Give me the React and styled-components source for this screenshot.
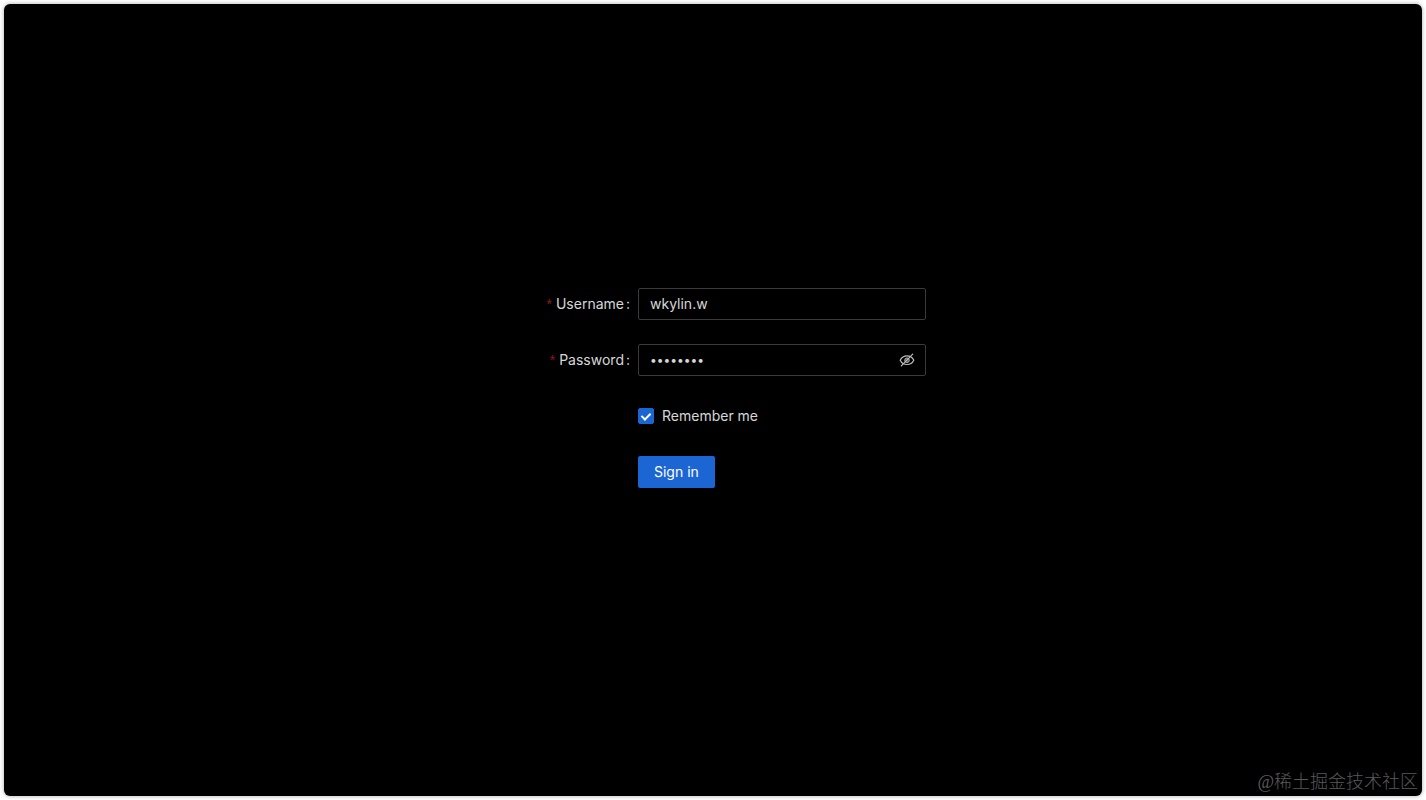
import React, { useState } from "react";
import styled, { createGlobalStyle } from "styled-components";

const GlobalStyle = createGlobalStyle`
  *, *::before, *::after { box-sizing: border-box; }
  body {
    margin: 0;
    background: #fff;
    font-family: Inter, "Noto Sans CJK SC", sans-serif;
    font-size: 14px;
    line-height: 22px;
  }
`;

const Page = styled.div`
  display: flex;
  min-height: 100vh;
  padding: 4px;
`;

const Screen = styled.main`
  position: relative;
  flex: 1;
  display: flex;
  align-items: center;
  justify-content: center;
  border-radius: 6px;
  background: #000;
  color: rgba(255, 255, 255, 0.85);
  box-shadow: 0 0 4px rgba(0, 0, 0, 0.35);
`;

const Form = styled.form`
  width: 100%;
  max-width: 426px;
`;

const Row = styled.div`
  display: grid;
  grid-template-columns: 138px 1fr;
  align-items: center;
  min-height: 32px;
  margin-bottom: 24px;
`;

const Label = styled.label`
  padding-right: 8px;
  text-align: right;

  &::before {
    content: "*";
    margin-right: 4px;
    color: #8c1a2b;
    font-family: "Liberation Sans", sans-serif;
  }

  &::after {
    content: ":";
    margin-left: 2px;
  }
`;

const Field = styled.div`
  grid-column: 2;
  display: flex;
  align-items: center;
`;

const InputBox = styled.div`
  flex: 1;
  display: flex;
  align-items: center;
  height: 32px;
  padding: 0 10px;
  border: 1px solid #3a3a3a;
  border-radius: 2px;
`;

const Input = styled.input`
  flex: 1;
  min-width: 0;
  padding: 0 1px;
  border: 0;
  outline: 0;
  background: transparent;
  color: inherit;
  font: inherit;

  &[type="password"] {
    font-size: 12px;
  }
`;

const IconButton = styled.button`
  display: flex;
  padding: 0;
  border: 0;
  background: transparent;
  color: #bdbdbd;
  cursor: pointer;
`;

const CheckLabel = styled.label`
  display: flex;
  align-items: center;
  gap: 8px;
  cursor: pointer;
`;

const Checkbox = styled.input`
  appearance: none;
  display: grid;
  place-items: center;
  width: 16px;
  height: 16px;
  margin: 0;
  border: 1px solid #3a3a3a;
  border-radius: 2px;

  &:checked {
    border-color: #1b66d2;
    background: #1b66d2;
  }

  &:checked::after {
    content: "";
    width: 6px;
    height: 9px;
    border: solid #fff;
    border-width: 0 2px 2px 0;
    transform: translateY(-1px) rotate(45deg);
  }
`;

const SubmitButton = styled.button`
  height: 32px;
  padding: 0 16px;
  border: 0;
  border-radius: 2px;
  background: #1b66d2;
  color: #fff;
  font: inherit;
  cursor: pointer;
`;

const Watermark = styled.span`
  position: absolute;
  right: 4px;
  bottom: 1px;
  color: #595959;
  font-family: "Liberation Serif", "Noto Sans CJK SC", serif;
  font-size: 18px;
  font-weight: 300;
  line-height: 26px;
`;

function EyeIcon({ crossed }) {
  return (
    <svg width="16" height="14" viewBox="0 0 16 14" fill="none" stroke="currentColor" strokeWidth="1.2" aria-hidden="true">
      <path d="M1.2 7.2C2.7 4.2 5 2.9 8 2.9s5.300 1.300 6.800 4.300C13.300 10.200 11 11.500 8 11.500S2.700 10.200 1.200 7.200z" />
      <circle cx="8" cy="7.2" r="2.3" fill="currentColor" fillOpacity="0.45" strokeWidth="0.9" />
      {crossed && <path d="M2.300 12.900L13.700 1.200" strokeLinecap="round" />}
    </svg>
  );
}

export default function App() {
  const [visible, setVisible] = useState(false);

  return (
    <Page>
      <GlobalStyle />
      <Screen>
        <Form onSubmit={(event) => event.preventDefault()}>
          <Row>
            <Label htmlFor="username">Username</Label>
            <Field>
              <InputBox>
                <Input id="username" defaultValue="wkylin.w" />
              </InputBox>
            </Field>
          </Row>
          <Row>
            <Label htmlFor="password">Password</Label>
            <Field>
              <InputBox>
                <Input
                  id="password"
                  type={visible ? "text" : "password"}
                  defaultValue="12345678"
                />
                <IconButton
                  type="button"
                  aria-label="Toggle password visibility"
                  onClick={() => setVisible(!visible)}
                >
                  <EyeIcon crossed={!visible} />
                </IconButton>
              </InputBox>
            </Field>
          </Row>
          <Row>
            <Field>
              <CheckLabel>
                <Checkbox type="checkbox" defaultChecked />
                Remember me
              </CheckLabel>
            </Field>
          </Row>
          <Row>
            <Field>
              <SubmitButton type="submit">Sign in</SubmitButton>
            </Field>
          </Row>
        </Form>
        <Watermark>@稀土掘金技术社区</Watermark>
      </Screen>
    </Page>
  );
}
